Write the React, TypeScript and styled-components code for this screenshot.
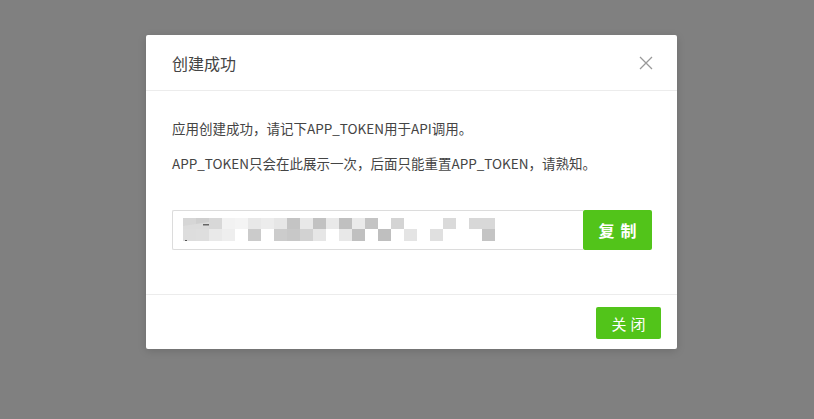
import styled, { createGlobalStyle } from "styled-components";

const GlobalStyle = createGlobalStyle`
  html, body {
    margin: 0;
    padding: 0;
    height: 100%;
  }
  body {
    font-family: "Noto Sans CJK SC", "Noto Sans", sans-serif;
  }
  #root {
    height: 100%;
  }
`;

const Overlay = styled.div`
  height: 100%;
  box-sizing: border-box;
  background: #808080;
  padding: 35px 0 0 146px;
`;

const Dialog = styled.div`
  width: 531px;
  background: #fff;
  border-radius: 2px;
  box-shadow: 0 2px 8px rgba(0, 0, 0, 0.15);
`;

const Header = styled.div`
  height: 55px;
  padding: 0 20px 0 26px;
  display: flex;
  align-items: center;
  justify-content: space-between;
  border-bottom: 1px solid #ececec;
`;

const Title = styled.div`
  font-size: 16px;
  color: #444;
`;

const CloseIcon = styled.button`
  border: 0;
  background: none;
  padding: 0;
  width: 16px;
  height: 16px;
  display: flex;
  align-items: center;
  justify-content: center;
  margin-right: 3px;
`;

const Body = styled.div`
  padding: 27px 26px 44px;
`;

const Text = styled.p`
  margin: 0 0 15px;
  font-size: 13.5px;
  line-height: 20px;
  color: #444;
`;

const TokenRow = styled.div`
  display: flex;
  margin-top: 37px;
  width: 480px;
`;

const TokenBox = styled.div`
  flex: 1;
  height: 40px;
  box-sizing: border-box;
  border: 1px solid #dcdcdc;
  border-right: 0;
  border-radius: 2px 0 0 2px;
  display: flex;
  align-items: center;
  padding-left: 10px;
`;

const GreenButton = styled.button<{ $big?: boolean }>`
  border: 0;
  border-radius: 2px;
  background: #52c41a;
  color: #fff;
  font-family: "Noto Sans CJK SC", sans-serif;
  font-size: ${(p) => (p.$big ? "16px" : "15px")};
  letter-spacing: ${(p) => (p.$big ? "6px" : "4px")};
  font-weight: ${(p) => (p.$big ? 600 : 400)};
  padding: 0 0 0 ${(p) => (p.$big ? "6px" : "4px")};
  width: ${(p) => (p.$big ? "69px" : "65px")};
  height: ${(p) => (p.$big ? "40px" : "32px")};
`;

const Footer = styled.div`
  border-top: 1px solid #ececec;
  display: flex;
  justify-content: flex-end;
  padding: 12px 16px 10px;
`;

// pixelated token: shade per cell, row 1 and row 2
const row1 = ["#d6d6d6", "#cfcfcf", "#d8d8d8", "#f2f2f2", "#f4f4f4", "#e8e8e8", "#ececec", "#e6e6e6", "#c4c4c4", "#e8e8e8", "#c2c2c2", "#e9e9e9", "#c0c0c0", "#eaeaea", "#c4c4c4", "", "#d4d4d4", "", "", "", "#dadada", "", "#d8d8d8", "#d8d8d8", ""];
const row2 = ["#dddddd", "#dedede", "#e9e9e9", "#eeeeee", "", "#cbcbcb", "", "#cccccc", "#c8c8c8", "#d2d2d2", "#e6e6e6", "", "#e8e8e8", "#c0c0c0", "", "#bfbfbf", "", "#e4e4e4", "", "#e0e0e0", "", "", "", "#c4c4c4", ""];

const Mosaic = () => (
  <svg width="330" height="24" viewBox="0 0 330 24">
    {row1.map((c, i) => (c ? <rect key={"a" + i} x={i * 13} y={0} width={13} height={11} fill={c} /> : null))}
    {row2.map((c, i) => (c ? <rect key={"b" + i} x={i * 13} y={11} width={13} height={12} fill={c} /> : null))}
    <path d="M0 8 L26 4 L26 11 L0 11 Z" fill="#dcdcdc" />
    <rect x="2" y="22" width="2" height="1" fill="#555" />
    <rect x="20" y="6" width="6" height="1.5" fill="#666" />
  </svg>
);

const App = () => (
  <>
    <GlobalStyle />
    <Overlay>
      <Dialog>
        <Header>
          <Title>创建成功</Title>
          <CloseIcon>
            <svg width="14" height="14" viewBox="0 0 14 14">
              <path d="M1 1 L13 13 M13 1 L1 13" stroke="#999" strokeWidth="1.3" />
            </svg>
          </CloseIcon>
        </Header>
        <Body>
          <Text>应用创建成功，请记下APP_TOKEN用于API调用。</Text>
          <Text>APP_TOKEN只会在此展示一次，后面只能重置APP_TOKEN，请熟知。</Text>
          <TokenRow>
            <TokenBox>
              <Mosaic />
            </TokenBox>
            <GreenButton $big>复制</GreenButton>
          </TokenRow>
        </Body>
        <Footer>
          <GreenButton>关闭</GreenButton>
        </Footer>
      </Dialog>
    </Overlay>
  </>
);

export default App;
